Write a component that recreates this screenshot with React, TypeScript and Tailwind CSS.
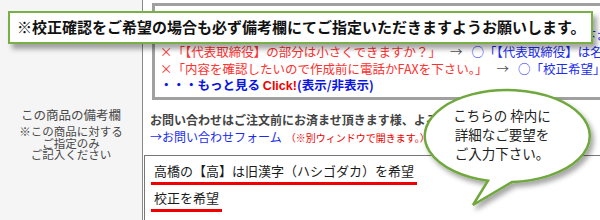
export default function App() {
  return (
    <div className="relative flex h-[220px] w-[600px] overflow-hidden bg-white font-['Noto_Sans_CJK_JP','Liberation_Sans',sans-serif]">
      {/* left label cell */}
      <div className="w-[143px] shrink-0 border-r border-[#8a8a8a] bg-[#f5f5f5] pt-[107px] text-center text-[#484848]">
        <div className="text-[12.5px] leading-[16px]">この商品の備考欄</div>
        <div className="mt-[3px] text-[11.5px] leading-[11.5px]">
          ※この商品に対する
          <br />
          ご指定のみ
          <br />
          ご記入ください
        </div>
      </div>

      {/* right cell */}
      <div className="min-w-0 flex-1 whitespace-nowrap">
        <div className="ml-[9px] mt-[3px] w-[480px] overflow-hidden border-[3px] border-[#a0a0a0] pb-[2px] pl-[5px] pt-[5px] text-[12.5px] leading-[16.5px]">
          <div className="text-[#444]">※例えばこのような書き方では正しく伝わらない場合がございます。</div>
          <div>
            <span className="text-[#ff3030]">×「ロゴを大きくして下さい。」</span>
            <span className="mx-[9px] text-[#555]">→</span>
            <span className="text-[#1a2cf0]">○「ロゴを現在の２倍の大きさにして下さい。シ</span>
          </div>
          <div>
            <span className="text-[#ff3030]">×「【代表取締役】の部分は小さくできますか？」</span>
            <span className="mx-[9px] text-[#555]">→</span>
            <span className="text-[#1a2cf0]">○「【代表取締役】は名前の前に小さく」</span>
          </div>
          <div>
            <span className="text-[#ff3030]">×「内容を確認したいので作成前に電話かFAXを下さい。」</span>
            <span className="mx-[9px] text-[#555]">→</span>
            <span className="text-[#1a2cf0]">○「校正希望」</span>
          </div>
          <div className="font-bold text-[#0a14e0]">
            ・・・もっと見る{" "}
            <span className="font-['Liberation_Sans',sans-serif] text-[#f00000]">Click!</span>
            (表示/非表示)
          </div>
        </div>

        <div className="ml-[7px] mt-[11px] text-[12px] leading-[17px]">
          <div className="font-bold text-[#444]">お問い合わせはご注文前にお済ませ頂きます様、よろしくお願い致します。</div>
          <div>
            <span className="text-[#1a2cf0]">→お問い合わせフォーム</span>
            <span className="ml-[4px] text-[10px] text-[#ee0000]">（※別ウィンドウで開きます。）</span>
          </div>
        </div>

        <div className="ml-[1px] mt-[9px] h-[67px] w-[470px] border border-[#777] pl-[6px] pt-[5px] text-[13px] text-[#1a1a1a]">
          <div>
            <span className="inline-block border-b-[3px] border-[#f00000] px-[3px] pb-[1px] leading-[20px]">
              高橋の【高】は旧漢字（ハシゴダカ）を希望
            </span>
          </div>
          <div className="mt-[3px]">
            <span className="inline-block border-b-[3px] border-[#f00000] px-[3px] pb-[1px] leading-[20px]">
              校正を希望
            </span>
          </div>
        </div>
      </div>

      {/* notice banner over the example box */}
      <div className="absolute left-[8px] top-[11px] flex h-[33px] w-[585px] items-center border-2 border-[#78b043] bg-white pl-[7px] text-[15px] font-bold text-[#111] shadow-[4px_5px_5px_rgba(0,0,0,0.35)]">
        ※校正確認をご希望の場合も必ず備考欄にてご指定いただきますようお願いします。
      </div>

      {/* speech bubble */}
      <div className="absolute left-[420px] top-[85px] h-[135px] w-[180px]">
        <svg width="180" height="135" viewBox="0 0 180 135" className="absolute left-0 top-0">
          <defs>
            <filter id="bs" x="-20%" y="-20%" width="140%" height="150%">
              <feDropShadow dx="3" dy="4" stdDeviation="2.5" floodColor="#000" floodOpacity="0.35" />
            </filter>
          </defs>
          <path
            d="M 92 96.9 A 82.5 46 0 1 0 68 95.7 L 53 120 Z"
            fill="#fff"
            stroke="#6fa83c"
            strokeWidth="2.5"
            strokeLinejoin="miter"
            filter="url(#bs)"
          />
        </svg>
        <div className="absolute left-[22px] top-[20.5px] w-[120px] text-center text-[13.5px] leading-[19px] text-[#222]">
          こちらの 枠内に
          <br />
          詳細なご要望を
          <br />
          ご入力下さい。
        </div>
      </div>
    </div>
  );
}
